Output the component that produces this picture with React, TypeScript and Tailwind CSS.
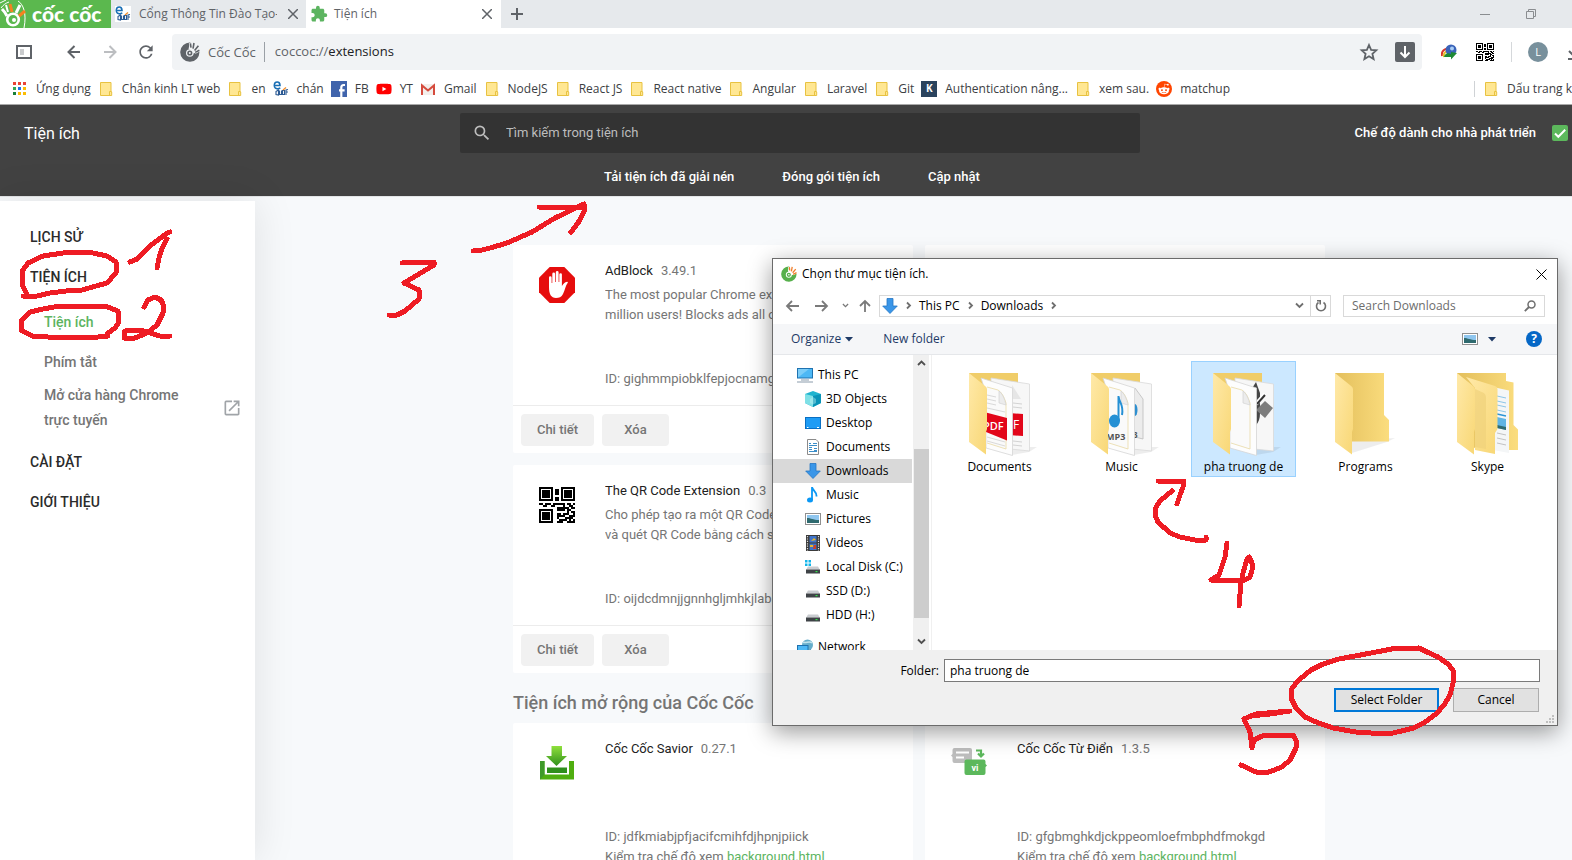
import React from "react";
import { FaRedditAlien, FaYoutube } from "react-icons/fa";
import { MdSearch, MdOpenInNew, MdRefresh, MdExtension } from "react-icons/md";

const UI = "font-['Open_Sans','Noto_Sans',sans-serif]";

/* ---------- small drawings ---------- */

function CocCocMark({ ring, leaf, hole }: { ring: string; leaf: string; hole: string }) {
  return (
    <svg viewBox="0 0 20 20" className="h-full w-full" aria-hidden="true">
      <path d="M10.500 .6A9.600 9.600 0 1 0 19.400 9.500L13.500 11.500 8.500 6.500Z" fill={ring} />
      <circle cx="9.800" cy="11" r="3.800" fill={hole} />
      <circle cx="9.800" cy="11" r="2.600" fill={ring} />
      <circle cx="9.800" cy="11" r="1" fill={hole} />
      <path d="M10.800 5.800 10 1M13 7 14 .8M14.600 8.600 18.600 3.600M15 10.600 19.600 8" stroke={hole} strokeWidth="2.400" />
      <path d="M11 5.600 10.400 1.400M13 6.600 14 1M14.600 8.400 18.400 3.800M15.200 10.400 19.400 8.200" stroke={leaf} strokeWidth="1.600" />
    </svg>
  );
}

function BrandLogo() {
  return (
    <svg viewBox="0 0 26 28" className="h-7 w-[26px]" aria-hidden="true">
      <path d="M0 3 6 0M1 8C3 5 6 3 9 2M18 1C23 4 27 13 24 28" stroke="#fff" strokeWidth="1" fill="none" />
      <circle cx="13" cy="19.500" r="5.800" fill="none" stroke="#fff" strokeWidth="2.600" />
      <circle cx="14" cy="20" r="2" fill="#fff" />
      <path d="M2 9C5 12 6 14 7 16" stroke="#fff" strokeWidth="3" fill="none" />
      <path d="M10 4 12 12" stroke="#f58220" strokeWidth="3" />
      <path d="M20 5 16 13" stroke="#fff" strokeWidth="3" />
      <path d="M25 11 19 16" stroke="#f58220" strokeWidth="3" />
      <path d="M6 5 8 12" stroke="#fff" strokeWidth="2" />
    </svg>
  );
}

function EduIcon() {
  return (
    <svg viewBox="0 0 16 16" className="h-4 w-4 shrink-0" aria-hidden="true">
      <rect width="16" height="16" fill="#fff" />
      <path d="M1.500 4.500H7C7 1.500 5.500 1 4.300 1 2.500 1 1.300 2.600 1.300 4.600 1.300 7 3 8 5 7.800 6 7.700 6.600 7.300 7.200 6.700" fill="none" stroke="#1a6fb5" strokeWidth="1.600" />
      <path d="M3 10.500 5.500 9V14L3 13.500ZM6.500 9.500V13.500H8.500V9.500M9.500 9.500H11.500V13.500H9.500ZM13 14V9L15 8.500M12.500 11H15" fill="none" stroke="#2b5a94" strokeWidth="1.100" />
      <path d="M10 9 13 6.500" stroke="#f28c28" strokeWidth="1.300" />
    </svg>
  );
}

function BookmarkFolder() {
  return (
    <svg viewBox="0 0 16 16" className="h-4 w-4 shrink-0" aria-hidden="true">
      <path d="M2.500 1.500H13V10.500L13.700 11V14.500H2.500Z" fill="#ffe793" stroke="#e8c241" />
      <path d="M11.500 14V10.500H13.500" fill="none" stroke="#e8c241" />
    </svg>
  );
}

function AppsGrid() {
  const colors = ["#ea4335", "#ea4335", "#ea4335", "#34a853", "#1a73e8", "#fbbc04", "#188038", "#fbbc04", "#fbbc04"];
  return (
    <svg viewBox="0 0 16 16" className="h-4 w-4 shrink-0" aria-hidden="true">
      {colors.map((c, i) => (
        <rect key={i} x={1 + (i % 3) * 5} y={1 + Math.floor(i / 3) * 5} width="3" height="3" fill={c} />
      ))}
    </svg>
  );
}

function FacebookIcon() {
  return (
    <svg viewBox="0 0 16 16" className="h-4 w-4 shrink-0" aria-hidden="true">
      <rect width="16" height="16" fill="#4064ac" />
      <path d="M14 4H12.800C11 4 10.300 5 10.300 6.500V16M8 9.300H13.600" fill="none" stroke="#fff" strokeWidth="2.200" />
    </svg>
  );
}

function GmailIcon() {
  return (
    <svg viewBox="0 0 16 16" className="h-4 w-4 shrink-0" aria-hidden="true">
      <rect x="1" y="3" width="14" height="11" fill="#f3efec" />
      <path d="M2 14V4.500L8 9.500 14 4.500V14" fill="none" stroke="#d54b3d" strokeWidth="2" />
    </svg>
  );
}

const QR_ROWS = [
  "111111100001111111",
  "100000101101000001",
  "101110101101011101",
  "101110101101011101",
  "101110100001011101",
  "100000101101000001",
  "111111101101111111",
  "000000000000000000",
  "110111011111101101",
  "001100110000100110",
  "000000000111111011",
  "111111100111101100",
  "100000100000001011",
  "101110100110111001",
  "101110100111100111",
  "101110100100011110",
  "100000100011110101",
  "111111100111001111",
];

function QrCode({ heavy }: { heavy?: boolean }) {
  return (
    <svg viewBox="0 0 18 18" className="h-full w-full" shapeRendering="crispEdges" aria-hidden="true">
      <rect width="18" height="18" fill="#fff" />
      {QR_ROWS.map((row, y) =>
        row.split("").map((c, x) => (c === "1" ? <rect key={`${x}-${y}`} x={x} y={y} width="1" height="1" fill="#000" /> : null))
      )}
      {heavy && <path d="M1.500 1.500H5.500V5.500H1.500ZM12.500 1.500H16.500V5.500H12.500ZM1.500 12.500H5.500V16.500H1.500Z" />}
    </svg>
  );
}

function AdBlockIcon() {
  return (
    <svg viewBox="0 0 36 36" className="h-9 w-9" aria-hidden="true">
      <path d="M10.700 0H25.300L36 10.700V25.300L25.300 36H10.700L0 25.300V10.700Z" fill="#e60d0d" />
      <path d="M10 20V10.500a1.300 1.300 0 0 1 2.600 0V16h.7V7a1.400 1.400 0 0 1 2.800 0V15h.7V5.500a1.400 1.400 0 0 1 2.800 0V15h.7V7.500a1.300 1.300 0 0 1 2.600 0V19c1.500-2 2.800-4.400 5.300-4.300.8.100.8.800.4 1.400C26.500 19 26 23 24 27c-1.500 3-4 4-7 4-5 0-7-4-7-11Z" fill="#fff" />
    </svg>
  );
}

function SaviorIcon() {
  return (
    <svg viewBox="0 0 36 36" className="h-9 w-9" aria-hidden="true">
      <defs>
        <linearGradient id="sv" x1="0" y1="0" x2="0" y2="1">
          <stop offset="0" stopColor="#8fe03c" />
          <stop offset="1" stopColor="#2f8f1c" />
        </linearGradient>
      </defs>
      <path d="M12.500 1H23V11H28L17.500 21 7 11H12.500Z" fill="url(#sv)" />
      <path d="M1 16H5.500V29.500H30V16H35V34.500H1Z" fill="#4fae10" />
      <path d="M1 16H5.500V29.500L1 34.500Z" fill="#3f9a2a" />
      <path d="M8 22.500H28V28H8Z" fill="#2f8f1c" />
    </svg>
  );
}

function DictIcon() {
  return (
    <svg viewBox="0 0 36 36" className="h-9 w-9" aria-hidden="true">
      <path d="M3.500 3H19a2 2 0 0 1 2 2V18H3.500a2 2 0 0 1-2-2V12L0 10.500 1.500 9V5a2 2 0 0 1 2-2Z" fill="#bdbdbd" />
      <path d="M5 7.500H18M5 12.500H13" stroke="#fff" strokeWidth="2.200" />
      <path d="M25 5.500H30V10M27 8.500 30 11.500 33 8.500" fill="none" stroke="#5cb85c" strokeWidth="2.200" />
      <path d="M15.500 14.500H32.500a2 2 0 0 1 2 2V19L36 20.500 34.500 22V28a2 2 0 0 1-2 2H15.500a2 2 0 0 1-2-2V16.500a2 2 0 0 1 2-2Z" fill="#5cb85c" />
      <text x="24" y="26" textAnchor="middle" fontSize="9" fontWeight="700" fill="#fff">vi</text>
    </svg>
  );
}

function DownArrow() {
  return (
    <svg viewBox="0 0 16 16" className="h-4 w-4 shrink-0" aria-hidden="true">
      <path d="M5 .5H11V8H15.300L8 15.500.7 8H5Z" fill="#3a96e8" stroke="#2576c4" strokeWidth=".8" />
    </svg>
  );
}

function TreeIcon({ kind }: { kind: string }) {
  if (kind === "down") return <DownArrow />;
  return (
    <svg viewBox="0 0 16 16" className="h-4 w-4 shrink-0" aria-hidden="true">
      {kind === "pc" && (
        <>
          <rect x=".5" y="1.500" width="15" height="9.500" fill="#4db8f5" stroke="#1f72b0" />
          <path d="M1 10.500 12 2H1Z" fill="#7ccdf8" />
          <path d="M4 13H12M0 15H16" stroke="#8a9bab" strokeWidth="1" />
        </>
      )}
      {kind === "3d" && (
        <>
          <path d="M0 3 8 0 16 3V12L8 16 0 12Z" fill="#1fb4cf" />
          <path d="M0 3 8 5V16L0 12Z" fill="#7fe0e6" />
          <path d="M8 5 16 3V12L8 16Z" fill="#0a94b8" />
          <path d="M5 8 8 6 11 8V12L8 13.500 5 12Z" fill="#c9f5f5" opacity=".4" />
        </>
      )}
      {kind === "desktop" && (
        <>
          <rect x=".5" y="2.500" width="15" height="11" fill="#1e9cf5" stroke="#0a6fc2" />
          <path d="M2 12.500H3.500M12 12.500H14" stroke="#fff" />
        </>
      )}
      {kind === "doc" && (
        <>
          <path d="M2.500.5H11L13.500 3V15.500H2.500Z" fill="#fff" stroke="#8b8b8b" />
          <path d="M4 4.500H6M8 4.500H12M4 6.500H12M4 8.500H7M9 9.500H12M4 10.500H7M9 11.500H12M4 12.500H12" stroke="#3b8ec9" strokeWidth="1" />
        </>
      )}
      {kind === "music" && (
        <>
          <ellipse cx="5" cy="13" rx="3" ry="2.500" fill="#0a98f5" />
          <path d="M7 13V0C7.500 3.500 12 4.500 11.500 9.500" fill="none" stroke="#0a98f5" strokeWidth="1.800" />
        </>
      )}
      {kind === "pic" && (
        <>
          <rect x=".5" y="2.500" width="15" height="11" fill="#fff" stroke="#8f8f8f" />
          <rect x="2" y="4" width="12" height="8" fill="#8fc6ef" />
          <path d="M2 7C6 7 8 9 14 9V12H2Z" fill="#2f6a6f" />
        </>
      )}
      {kind === "video" && (
        <>
          <rect x="1" y="0" width="14" height="16" fill="#3a3a3a" />
          <path d="M2.500 1V16M13.500 1V16" stroke="#ddd" strokeWidth="1.200" strokeDasharray="1.200 1.200" />
          <rect x="4.500" y="1" width="7" height="6.500" fill="#3f74c9" />
          <rect x="4.500" y="8.500" width="7" height="6.500" fill="#3f74c9" />
          <path d="M6 6 9 3 11 5ZM5 10H8V12H5Z" fill="#e8b62c" />
          <path d="M9 10H11V14H8Z" fill="#c9402c" />
        </>
      )}
      {(kind === "disk" || kind === "cdisk") && (
        <>
          {kind === "cdisk" && <path d="M0 1H2.500V3.500H0ZM3.500 1H6V3.500H3.500ZM0 4.500H2.500V7H0ZM3.500 4.500H6V7H3.500Z" fill="#12b5ea" />}
          <path d="M3 7.500H13L14.800 10.500H1.200Z" fill="#c9ccd0" />
          <rect x="1" y="10.500" width="14" height="4" fill="#3f4347" />
          <rect x="10.500" y="12" width="2" height="1.200" fill="#35e04a" />
        </>
      )}
      {kind === "net" && (
        <>
          <circle cx="10.500" cy="6" r="5.500" fill="#67aecb" />
          <path d="M6 3C9 5 12 1 15 4" stroke="#c3e4ee" strokeWidth="1.600" fill="none" />
          <rect x=".5" y="6.500" width="10.500" height="7" fill="#4db8f5" stroke="#1f72b0" />
          <path d="M11 13.500 14 10V14L11 16Z" fill="#2a6fa3" />
        </>
      )}
    </svg>
  );
}

function Chevron({ dir, className }: { dir: "right" | "down" | "up"; className?: string }) {
  const d = dir === "right" ? "M3 1.500 6 4.500 3 7.500" : dir === "down" ? "M1 2.500 4.500 6 8 2.500" : "M1 6 4.500 2.500 8 6";
  return (
    <svg viewBox="0 0 9 9" className={`h-[9px] w-[9px] shrink-0 ${className ?? ""}`} aria-hidden="true">
      <path d={d} fill="none" stroke="currentColor" strokeWidth="1.800" />
    </svg>
  );
}

function FolderArt({ kind }: { kind: string }) {
  const flap = "M0 0 15.500 12.500Q18 14 18 16V56L17 59V81.500L0 69Z";
  return (
    <svg viewBox="0 0 62 84" className="h-[84px] w-[62px] overflow-visible" aria-hidden="true">
      <defs>
        <linearGradient id="flap" x1="0" y1="0" x2="1" y2="1">
          <stop offset="0" stopColor="#ffe9a8" />
          <stop offset="1" stopColor="#f8d775" />
        </linearGradient>
        <linearGradient id="back" x1="0" y1="0" x2="1" y2="0">
          <stop offset="0" stopColor="#e3bf5c" />
          <stop offset="1" stopColor="#fbdd7e" />
        </linearGradient>
      </defs>
      {kind === "empty" && (
        <>
          <path d="M16 68 60 65 52 69 17 80Z" fill="#000" opacity=".07" />
          <path d="M0 0H49V42L54 47V68.500H17L0 60Z" fill="url(#back)" />
        </>
      )}
      {kind === "skype" && (
        <>
          <path d="M0 0H49V8L56.500 9.500V52L61 56.500V77H20L0 60Z" fill="url(#back)" />
          <path d="M36 14 52 17.500V80L36 77Z" fill="#f4f6f7" />
          <path d="M40 23 49 25M40 28 49 30M40 32 49 34M40 37 49 39" stroke="#8ec6e8" strokeWidth="1" />
          <path d="M40 41 49 43" stroke="#2b95d6" strokeWidth="1.400" />
          <path d="M40 44 49 46V57L40 55Z" fill="#5fb4e4" />
          <path d="M40 52 49 54V57L40 55Z" fill="#2f6a6f" />
          <path d="M40 60 49 62M40 65 49 67M40 70 49 72" stroke="#c2c2c2" strokeWidth="1" />
          <path d="M9 4 38 13Q40.500 14 40.500 16V56L38 60V81L18 77V15Z" fill="url(#flap)" />
          <path d="M18 16 27 20Q29 22 29 24V76L18 74Z" fill="#efd27a" opacity=".7" />
        </>
      )}
      {(kind === "pdf" || kind === "mp3" || kind === "code") && (
        <>
          <path d="M43 74 68 74 60 79 43 82Z" fill="#000" opacity=".07" />
          <path d="M0 0H49V40H0Z" fill="#f0cd69" />
          <path d="M22 5 60.500 11V78L22 74Z" fill="#f7f7f7" stroke="#d9d9d9" strokeWidth=".8" />
          {kind === "pdf" && (
            <>
              <path d="M44 30 53 31M44 34 53 35M44 68 53 69M44 72 53 73" stroke="#d3d3d3" />
              <path d="M40 40 54 41V63L40 62Z" fill="#e2061a" />
              <text x="44" y="56" fontSize="12" fill="#fff">F</text>
              <path d="M43 12 52 26H43Z" fill="#e6e6e6" />
            </>
          )}
          {kind === "mp3" && (
            <>
              <path d="M44 15 52 26V66L44 64" fill="#ececec" stroke="#bdbdbd" strokeWidth=".8" />
              <ellipse cx="44" cy="37" rx="2.500" ry="6" fill="#2d8fd0" />
              <text x="42" y="65" fontSize="8" fontWeight="700" fill="#555">3</text>
            </>
          )}
          {kind === "code" && (
            <>
              <path d="M38 17 43 9 47 20V40Q47 48 43 52Z" fill="#474747" />
              <path d="M60 35 52 45 43 37 52 28Z" fill="#7d7d7d" />
              <path d="M43 31 52 21" stroke="#fff" strokeWidth="4" />
              <path d="M44 31 52 22" stroke="#333" strokeWidth="2" />
            </>
          )}
          <path d="M12 5 43.500 15V82.500L17 75V20Z" fill="#fdfdfd" stroke="#d6d6d6" strokeWidth=".8" />
          <path d="M18 14 29 17Q34 20 37 30V76L18 70" fill="#fafafa" stroke="#e9d9a6" strokeWidth=".8" />
          <path d="M30 18V30L37 32Q35 22 30 18Z" fill="#ececec" stroke="#cfcfcf" strokeWidth=".6" />
          {kind === "pdf" && (
            <>
              <path d="M18 22 27 24M18 26 27 28M18 30 27 32M18 35 36 39M18 64 36 69M18 68 36 73" stroke="#d9d9d9" />
              <path d="M17 39.500 38 45V67.500L17 59Z" fill="#e2061a" />
              <text x="14" y="57" fontSize="11" fontWeight="600" fill="#fff">PDF</text>
            </>
          )}
          {kind === "mp3" && (
            <>
              <ellipse cx="23.500" cy="48" rx="5.500" ry="6.500" fill="#2590d4" />
              <path d="M27.500 48V23C28 30 33 31 31 42" fill="none" stroke="#2590d4" strokeWidth="2" />
              <text x="15" y="67" fontSize="9" fontWeight="700" fill="#555">MP3</text>
            </>
          )}
        </>
      )}
      <path d={flap} fill="url(#flap)" />
    </svg>
  );
}

/* ---------- browser chrome ---------- */

function TabStrip() {
  return (
    <div className="flex h-7 shrink-0 bg-[#e6e9ec]">
      <div className="flex w-[111px] items-center bg-[#5bb84e] text-white">
        <BrandLogo />
        <span className="pl-1.5 font-['Lato',sans-serif] text-[21px] leading-7 font-black">cốc cốc</span>
      </div>
      <div className="flex w-[195px] items-center gap-2 pr-1 pl-1">
        <EduIcon />
        <span className="w-[138px] overflow-hidden text-xs whitespace-nowrap text-[#5f6368]">Cổng Thông Tin Đào Tạo-</span>
        <button aria-label="Đóng thẻ" className="flex h-5 w-4 items-center justify-center text-[#5f6368]">
          <CloseX />
        </button>
      </div>
      <div className="flex w-[195px] items-center gap-1.5 bg-white pr-1.5 pl-1 text-[#5f6368]">
        <MdExtension className="h-[18px] w-[18px] text-[#5cb460]" />
        <span className="flex-1 text-xs">Tiện ích</span>
        <button aria-label="Đóng thẻ" className="flex h-5 w-4 items-center justify-center">
          <CloseX />
        </button>
      </div>
      <button aria-label="Thẻ mới" className="flex w-8 items-center justify-center text-[#5f6368]">
        <svg viewBox="0 0 12 12" className="h-3 w-3"><path d="M6 0V12M0 6H12" stroke="currentColor" strokeWidth="2" /></svg>
      </button>
      <div className="flex flex-1 items-center justify-end gap-9 pr-16 text-[#8a8d90]">
        <button aria-label="Thu nhỏ"><svg viewBox="0 0 10 10" className="h-2.5 w-2.5"><path d="M0 5.500H10" stroke="currentColor" /></svg></button>
        <button aria-label="Khôi phục"><svg viewBox="0 0 10 10" className="h-2.5 w-2.5"><path d="M.5 2.500H7.500V9.500H.5ZM2.500 2.500V.5H9.500V7.500H7.500" fill="none" stroke="currentColor" /></svg></button>
      </div>
    </div>
  );
}

function CloseX() {
  return <svg viewBox="0 0 10 10" className="h-2.5 w-2.5" aria-hidden="true"><path d="M0 0 10 10M10 0 0 10" stroke="currentColor" strokeWidth="1.500" /></svg>;
}

function ToolArrow({ d }: { d: string }) {
  return (
    <svg viewBox="0 0 20 20" className="h-5 w-5" aria-hidden="true">
      <path d={d} fill="none" stroke="currentColor" strokeWidth="2" />
    </svg>
  );
}

function Toolbar() {
  return (
    <div className="flex h-12 shrink-0 items-center bg-white pl-4 text-[#5f6368]">
      <button aria-label="Thanh bên" className="w-8">
        <svg viewBox="0 0 16 14" className="h-3.5 w-4"><rect x="1" y="1" width="14" height="12" fill="none" stroke="#5f6368" strokeWidth="2" /><rect x="4" y="4" width="4" height="6" fill="#c9cbcd" /></svg>
      </button>
      <div className="flex flex-1 items-center gap-4 pl-4">
        <button aria-label="Quay lại"><ToolArrow d="M16 10H5M10.500 4 4.500 10 10.500 16" /></button>
        <button aria-label="Tiến" className="text-[#bcbec1]"><ToolArrow d="M4 10H15M9.500 4 15.500 10 9.500 16" /></button>
        <button aria-label="Tải lại"><MdRefresh className="h-5 w-5" /></button>
        <div className="flex h-9 flex-1 items-center rounded bg-[#f1f3f5] pr-[7px] pl-2">
          <span className="h-5 w-5 shrink-0"><CocCocMark ring="#5f6368" leaf="#5f6368" hole="#f1f3f5" /></span>
          <span className="border-r border-[#9aa0a6] py-0.5 pr-2 pl-2 text-[13px] leading-4">Cốc Cốc</span>
          <span className="flex-1 pl-2.5 text-[13px]">coccoc://<span className="text-[#202124]">extensions</span></span>
          <button aria-label="Đánh dấu trang" className="pr-4">
            <svg viewBox="0 0 20 20" className="h-5 w-5"><path d="M10 3 12.100 7.900 17.300 8.300 13.400 11.800 14.600 17 10 14.200 5.400 17 6.600 11.800 2.700 8.300 7.900 7.900Z" fill="none" stroke="currentColor" strokeWidth="1.800" /></svg>
          </button>
          <button aria-label="Tải xuống" className="flex h-5 w-5 items-center justify-center rounded-[2px] bg-[#5f6368]">
            <svg viewBox="0 0 12 14" className="h-3.5 w-3"><path d="M6 1V12M1.500 7.500 6 12 10.500 7.500" fill="none" stroke="#fff" strokeWidth="2" /></svg>
          </button>
        </div>
      </div>
      <div className="flex w-[178px] items-center pl-[19px]">
        <svg viewBox="0 0 16 16" className="h-4 w-4" aria-label="IDM">
          <path d="M1 12C0 7 4 4 8 5" fill="none" stroke="#d8372a" strokeWidth="2" />
          <path d="M3 13C2 9 5 6.500 9 7.500" fill="none" stroke="#e8c02c" strokeWidth="2" />
          <circle cx="10" cy="6" r="5.500" fill="#3a63b9" />
          <circle cx="11" cy="4.500" r="2" fill="#a9cdf5" />
          <path d="M3 13C4 9 7 8.500 10 10V8L16 9 10 15.500V13Z" fill="#1f8a35" />
        </svg>
        <span className="ml-[19px] h-[18px] w-[18px]"><QrCode /></span>
        <span className="ml-[17px] h-5 w-px bg-[#d5d8db]" />
        <button aria-label="Hồ sơ" className="ml-4 flex h-5 w-5 items-center justify-center rounded-full bg-[#78909c] text-[11px] text-white">L</button>
        <svg viewBox="0 0 16 16" className="ml-5 h-4 w-4"><path d="M1 7 8 14 15 7M0 15H16" fill="none" stroke="#5f6368" strokeWidth="2" /></svg>
      </div>
    </div>
  );
}

const BOOKMARKS: { icon: string; label: string }[] = [
  { icon: "apps", label: "Ứng dụng" },
  { icon: "folder", label: "Chân kinh LT web" },
  { icon: "folder", label: "en" },
  { icon: "edu", label: "chán" },
  { icon: "fb", label: "FB" },
  { icon: "yt", label: "YT" },
  { icon: "gmail", label: "Gmail" },
  { icon: "folder", label: "NodeJS" },
  { icon: "folder", label: "React JS" },
  { icon: "folder", label: "React native" },
  { icon: "folder", label: "Angular" },
  { icon: "folder", label: "Laravel" },
  { icon: "folder", label: "Git" },
  { icon: "k", label: "Authentication nâng..." },
  { icon: "folder", label: "xem sau." },
  { icon: "reddit", label: "matchup" },
];

function BookmarkIcon({ icon }: { icon: string }) {
  if (icon === "apps") return <AppsGrid />;
  if (icon === "edu") return <EduIcon />;
  if (icon === "fb") return <FacebookIcon />;
  if (icon === "yt") return <FaYoutube className="h-4 w-4 shrink-0 text-[#f00]" />;
  if (icon === "gmail") return <GmailIcon />;
  if (icon === "k") return <span className="flex h-4 w-4 shrink-0 items-center justify-center bg-[#2a435d] text-[10px] font-bold text-white">K</span>;
  if (icon === "reddit")
    return <span className="flex h-4 w-4 shrink-0 items-center justify-center rounded-full bg-[#ff4500]"><FaRedditAlien className="h-3 w-3 text-white" /></span>;
  return <BookmarkFolder />;
}

function BookmarksBar() {
  return (
    <div className="flex h-[29px] shrink-0 items-center justify-between border-b border-[#a9a9a9] bg-white pb-[3px] pl-3 text-xs text-[#3c4043]">
      <nav className="flex items-center gap-[7px]">
        {BOOKMARKS.map((b) => (
          <a key={b.label} href="#" className="flex items-center gap-2 whitespace-nowrap">
            <BookmarkIcon icon={b.icon} />
            {b.label}
          </a>
        ))}
      </nav>
      <a href="#" className="flex w-[126px] items-center gap-2 border-l border-[#cfd2d5] pl-2 whitespace-nowrap">
        <BookmarkFolder />
        Dấu trang khác
      </a>
    </div>
  );
}

/* ---------- extensions page ---------- */

function PageHeader() {
  return (
    <header className="h-[91px] shrink-0 bg-[#424242] pt-2 text-[13px] font-medium text-white">
      <div className="flex h-10 items-center">
        <h1 className="flex-1 pt-0.5 pr-2 pl-6 text-base font-normal">Tiện ích</h1>
        <label className="flex h-10 w-[680px] items-center gap-3.5 rounded-[2px] bg-[#333] pl-3 text-[#bdbdbd]">
          <MdSearch className="h-5 w-5" />
          <input type="search" placeholder="Tìm kiếm trong tiện ích" className="flex-1 bg-transparent font-normal outline-none placeholder:text-[#bdbdbd]" />
        </label>
        <label className="flex flex-1 items-center justify-end gap-4 pr-8">
          Chế độ dành cho nhà phát triển
          <span className="relative h-4 w-4">
            <input type="checkbox" defaultChecked className="block h-4 w-4 appearance-none rounded-[2px] bg-[#5cb85c]" />
            <svg viewBox="0 0 16 16" className="pointer-events-none absolute inset-0 h-4 w-4" aria-hidden="true"><path d="M3 8.500 6.300 11.800 13.200 4.800" fill="none" stroke="#fff" strokeWidth="2" /></svg>
          </span>
        </label>
      </div>
      <div className="flex h-12 items-center justify-center gap-12 pr-4">
        <button>Tải tiện ích đã giải nén</button>
        <button>Đóng gói tiện ích</button>
        <button>Cập nhật</button>
      </div>
    </header>
  );
}

function Sidebar() {
  return (
    <nav className="mt-1 flex w-[255px] shrink-0 flex-col bg-white pt-4 pl-[30px] text-sm font-medium text-[#2b2b2b] shadow-[0_0_40px_rgba(0,0,0,0.1)]">
      <a href="#" className="flex h-10 items-center">LỊCH SỬ</a>
      <a href="#" className="flex h-10 items-center">TIỆN ÍCH</a>
      <div className="flex flex-col pt-[5px] pb-1.5 pl-3.5 text-[#757575]">
        <a href="#" className="flex h-10 items-center text-[#5cb460]">Tiện ích</a>
        <a href="#" className="flex h-10 items-center">Phím tắt</a>
        <a href="#" className="flex items-center justify-between pt-px pr-[13px] pb-[3px] leading-[25px]">
          <span className="w-[150px]">Mở cửa hàng Chrome trực tuyến</span>
          <MdOpenInNew className="h-5 w-5 text-[#a0a4a8]" />
        </a>
      </div>
      <a href="#" className="flex h-10 items-center">CÀI ĐẶT</a>
      <a href="#" className="flex h-10 items-center">GIỚI THIỆU</a>
    </nav>
  );
}

interface Ext {
  icon: React.ReactNode;
  name: string;
  version: string;
  desc: string;
  id: string;
  background?: boolean;
}

function ExtensionCard({ ext }: { ext: Ext }) {
  return (
    <article className="flex h-52 w-[400px] flex-col rounded-[2px] bg-white text-[#757575]">
      <div className="flex flex-1 pt-4">
        <div className="w-[92px] shrink-0 pt-1.5 pl-[26px]">
          <div className="h-9 w-9">{ext.icon}</div>
        </div>
        <div className="flex flex-1 flex-col overflow-hidden pr-4">
          <h3 className="flex gap-2 leading-5">
            <span className="text-[#212121]">{ext.name}</span>
            {ext.version}
          </h3>
          <p className={ext.background ? "mt-1 h-16 leading-5" : "mt-1 h-[84px] overflow-hidden leading-5 whitespace-pre-line"}>{ext.desc}</p>
          <p className="leading-5 whitespace-nowrap">ID: {ext.id}</p>
          {ext.background && (
            <p className="leading-5 whitespace-nowrap">
              Kiểm tra chế độ xem <a href="#" className="text-[#5cb460]">background.html</a>
            </p>
          )}
        </div>
      </div>
      <div className="flex h-12 items-center gap-2 border-t border-[#ececec] pl-2 font-medium">
        <button className="h-8 w-[73px] rounded bg-[#f1f1f1]">Chi tiết</button>
        <button className="h-8 w-[67px] rounded bg-[#f1f1f1]">Xóa</button>
      </div>
    </article>
  );
}

const MINE: (Ext | null)[] = [
  { icon: <AdBlockIcon />, name: "AdBlock", version: "3.49.1", desc: "The most popular Chrome extension, with over 60\nmillion users! Blocks ads all over the web.", id: "gighmmpiobklfepjocnamgkkbiglidom" },
  null,
  { icon: <QrCode heavy />, name: "The QR Code Extension", version: "0.3", desc: "Cho phép tạo ra một QR Code từ trang web\nvà quét QR Code bằng cách sử dụng webcam", id: "oijdcdmnjjgnnhgljmhkjlablaejfeeb" },
  null,
];

const BUILT_IN: Ext[] = [
  { icon: <SaviorIcon />, name: "Cốc Cốc Savior", version: "0.27.1", desc: "", id: "jdfkmiabjpfjacifcmihfdjhpnjpiick", background: true },
  { icon: <DictIcon />, name: "Cốc Cốc Từ Điển", version: "1.3.5", desc: "", id: "gfgbmghkdjckppeomloefmbphdfmokgd", background: true },
];

function Content() {
  return (
    <main className="flex flex-1 justify-center overflow-hidden pr-[17px] text-[13px]">
      <div className="pt-12">
        <div className="grid grid-cols-2 gap-3">
          {MINE.map((e, i) => (e ? <ExtensionCard key={i} ext={e} /> : <article key={i} className="h-52 w-[400px] rounded-[2px] bg-white" />))}
        </div>
        <h2 className="flex h-[50px] items-center pt-2.5 text-lg font-medium text-[#757575]">Tiện ích mở rộng của Cốc Cốc</h2>
        <div className="grid grid-cols-2 gap-3">
          {BUILT_IN.map((e) => <ExtensionCard key={e.id} ext={e} />)}
        </div>
      </div>
    </main>
  );
}

/* ---------- folder picker ---------- */

const TREE = [
  { kind: "3d", label: "3D Objects" },
  { kind: "desktop", label: "Desktop" },
  { kind: "doc", label: "Documents" },
  { kind: "down", label: "Downloads" },
  { kind: "music", label: "Music" },
  { kind: "pic", label: "Pictures" },
  { kind: "video", label: "Videos" },
  { kind: "cdisk", label: "Local Disk (C:)" },
  { kind: "disk", label: "SSD (D:)" },
  { kind: "disk", label: "HDD (H:)" },
];

const FILES = [
  { kind: "pdf", label: "Documents" },
  { kind: "mp3", label: "Music" },
  { kind: "code", label: "pha truong de" },
  { kind: "empty", label: "Programs" },
  { kind: "skype", label: "Skype" },
];

function Caret() {
  return <svg viewBox="0 0 8 5" className="h-[5px] w-2" aria-hidden="true"><path d="M0 0H8L4 4.500Z" fill="#1e3a66" /></svg>;
}

function NavArrow({ d }: { d: string }) {
  return <svg viewBox="0 0 14 14" className="h-3.5 w-3.5" aria-hidden="true"><path d={d} fill="none" stroke="#7a7a7a" strokeWidth="1.800" /></svg>;
}

function FolderDialog() {
  return (
    <div role="dialog" aria-label="Chọn thư mục tiện ích." className={`absolute top-[258px] left-[772px] w-[786px] border border-[#6b6b6b] bg-white text-xs text-black shadow-[0_6px_22px_rgba(0,0,0,0.4)] ${UI}`}>
      <div className="flex h-[30px] items-center gap-[5px] pr-2.5 pl-2">
        <span className="h-4 w-4"><CocCocMark ring="#57b04c" leaf="#f07c28" hole="#fff" /></span>
        <span className="flex-1">Chọn thư mục tiện ích.</span>
        <button aria-label="Close"><svg viewBox="0 0 11 11" className="h-[11px] w-[11px]"><path d="M.5.5 10.500 10.500M10.500.5.5 10.500" stroke="#000" /></svg></button>
      </div>
      <div className="flex h-[35px] items-center pr-3 pb-0.5 pl-3">
        <div className="flex w-[94px] items-center text-[#7a7a7a]">
          <button aria-label="Back"><NavArrow d="M14 7H2M7 2 2 7 7 12" /></button>
          <button aria-label="Forward" className="pl-4"><NavArrow d="M0 7H12M7 2 12 7 7 12" /></button>
          <button aria-label="Recent" className="pl-3"><Chevron dir="down" className="scale-75" /></button>
          <button aria-label="Up" className="pl-2"><NavArrow d="M7 13V2M2 7 7 2 12 7" /></button>
        </div>
        <div className="flex h-[22px] flex-1 items-center border border-[#d9d9d9] pl-0.5 text-[#6f6f6f]">
          <DownArrow />
          <Chevron dir="right" className="mx-1.5" />
          <span className="text-black">This PC</span>
          <Chevron dir="right" className="mx-1.5" />
          <span className="text-black">Downloads</span>
          <Chevron dir="right" className="mx-1.5" />
          <span className="flex-1" />
          <Chevron dir="down" className="mr-1.5" />
          <button aria-label="Refresh" className="flex h-full w-5 items-center justify-center border-l border-[#d9d9d9]">
            <svg viewBox="0 0 12 12" className="h-3 w-3"><path d="M8.500 2.500A4.500 4.500 0 1 1 3.500 2.500M2 .8H5.200V4.500" fill="none" stroke="#6f6f6f" strokeWidth="1.600" /></svg>
          </button>
        </div>
        <label className="ml-3 flex h-[22px] w-[202px] items-center border border-[#d9d9d9] pr-2 pl-2">
          <input aria-label="Search Downloads" placeholder="Search Downloads" className="w-0 flex-1 outline-none placeholder:text-[#6d6d6d]" />
          <svg viewBox="0 0 12 12" className="h-3 w-3"><circle cx="7.500" cy="4.500" r="3.500" fill="none" stroke="#6f6f6f" strokeWidth="1.500" /><path d="M5 7 .8 11.200" stroke="#6f6f6f" strokeWidth="1.800" /></svg>
        </label>
      </div>
      <div className="flex h-[31px] items-center border-b border-[#e5e7ea] bg-[#f5f6f8] pr-[15px] pl-[18px] text-[#1e3a66]">
        <button className="flex items-center gap-1">Organize <Caret /></button>
        <button className="ml-[30px]">New folder</button>
        <div className="flex flex-1 items-center justify-end">
          <button aria-label="View" className="flex items-center gap-2.5"><TreeIcon kind="pic" /><Caret /></button>
          <button aria-label="Help" className="ml-[30px] flex h-4 w-4 items-center justify-center rounded-full bg-[#0567c6] text-xs font-bold text-white">?</button>
        </div>
      </div>
      <div className="flex h-[295px]">
        <ul className="h-full w-[139px] overflow-hidden pt-2">
          <li className="flex h-6 items-center gap-[5px] pl-6"><TreeIcon kind="pc" />This PC</li>
          {TREE.map((t) => (
            <li key={t.label} className={t.label === "Downloads" ? "flex h-6 items-center gap-[5px] bg-[#d9d9d9] pl-8" : "flex h-6 items-center gap-[5px] pl-8"}>
              <TreeIcon kind={t.kind} />
              {t.label}
            </li>
          ))}
          <li className="mt-2 flex h-6 items-center gap-[5px] pl-6"><TreeIcon kind="net" />Network</li>
        </ul>
        <div className="ml-px flex w-4 flex-col items-center bg-[#f0f0f0] pb-1 text-[#505050]">
          <Chevron dir="up" className="mt-1" />
          <div className="mt-[81px] h-[169px] w-[15px] bg-[#cdcdcd]" />
          <div className="flex-1" />
          <Chevron dir="down" />
        </div>
        <ul className="ml-0.5 flex flex-1 items-start gap-[17px] border-l border-[#f0f0f0] pt-1.5 pl-[15px]">
          {FILES.map((f) => (
            <li key={f.label} className={f.kind === "code" ? "flex h-[116px] w-[105px] flex-col items-center border border-[#99d1ff] bg-[#cce8ff] pt-[11px]" : "flex h-[116px] w-[105px] flex-col items-center border border-transparent pt-[11px]"}>
              <FolderArt kind={f.kind} />
              <span className="leading-5">{f.label}</span>
            </li>
          ))}
        </ul>
      </div>
      <div className="flex h-[75px] flex-col bg-[#f0f0f0] pt-[9px]">
        <label className="flex h-[23px] items-center justify-end gap-[5px] pr-[17px]">
          Folder:
          <input defaultValue="pha truong de" className="h-[23px] w-[596px] border border-[#7a7a7a] bg-white px-[5px] outline-none" />
        </label>
        <div className="flex flex-1 justify-end gap-3.5 pt-1.5 pr-[18px]">
          <button className="h-6 w-[105px] border-2 border-[#0078d7] bg-[#e1e1e1]">Select Folder</button>
          <button className="h-6 w-[86px] border border-[#adadad] bg-[#e1e1e1]">Cancel</button>
        </div>
        <svg viewBox="0 0 8 8" className="mr-[3px] mb-0.5 h-2 w-2 shrink-0 self-end" aria-hidden="true">
          <path d="M6 0H8V2H6ZM3 3H5V5H3ZM6 3H8V5H6ZM0 6H2V8H0ZM3 6H5V8H3ZM6 6H8V8H6Z" fill="#bfbfbf" />
        </svg>
      </div>
    </div>
  );
}

/* ---------- pen marks ---------- */

const STROKES = [
  "M23 296H37L50 293 66 291 82 290 96 286 107 283 116 273V262L107 256 88 252H70L43 256 28 263 22 271V284L27 295",
  "M130 262 137 259 150 246 167 233 170 232",
  "M167 239 162 248 159 258 157 268",
  "M108 336 98 337H48L32 336 21 330V321L30 312 43 309 60 306H105L118 311 119 322 115 328 108 333",
  "M144 307 148 300 155 297 161 300 163 304V313L157 325 147 333 135 338H124V332L128 330H140L150 333 160 336H170",
  "M402 263 434 262V265L404 283 419 290V299L405 311 397 315H389",
  "M473 251 482 250 490 248 507 243 532 232 555 218 584 204V212L578 223 571 232M539 207H583",
  "M1158 481H1184L1183 487 1180 495 1177 504",
  "M1172 491 1160 501 1155 509V515L1158 522 1170 533 1180 537 1195 540H1206V537",
  "M1227 543 1225 557 1219 575 1211 580 1243 581 1250 577 1252 570V563L1249 557 1247 559 1243 573 1241 583 1239 606",
  "M1241 765 1256 772H1269L1282 767 1290 760 1296 748V740L1293 735H1275L1262 736 1254 740 1252 748 1250 732 1244 719 1256 714 1290 711 1270 714 1250 716",
  "M1419 648H1397L1371 653 1339 659 1323 664 1311 670 1299 680 1292 688 1291 698 1296 708 1305 717 1316 722 1333 728 1356 732 1371 733H1393L1414 728 1425 722 1436 714 1444 705 1450 695 1453 683V670L1448 664 1438 657 1427 652 1419 648",
];

function PenMarks() {
  return (
    <svg viewBox="0 0 1572 860" className="pointer-events-none absolute top-0 left-0 h-[860px] w-[1572px]" shapeRendering="crispEdges" aria-hidden="true">
      {STROKES.map((d) => (
        <path key={d} d={d} fill="none" stroke="#ee1c24" strokeWidth="5" strokeLinecap="round" strokeLinejoin="round" />
      ))}
    </svg>
  );
}

export default function App() {
  return (
    <div className="relative h-screen overflow-hidden bg-[#f7f9fb]">
      <div className="flex h-full w-[calc(100%+28px)] flex-col">
        <div className={`shrink-0 ${UI}`}>
          <TabStrip />
          <Toolbar />
          <BookmarksBar />
        </div>
        <div className="flex min-h-0 flex-1 flex-col font-['Roboto',sans-serif]">
          <PageHeader />
          <div className="flex min-h-0 flex-1 border-t border-[#e3e5e7]">
            <Sidebar />
            <Content />
          </div>
        </div>
      </div>
      <FolderDialog />
      <PenMarks />
    </div>
  );
}
